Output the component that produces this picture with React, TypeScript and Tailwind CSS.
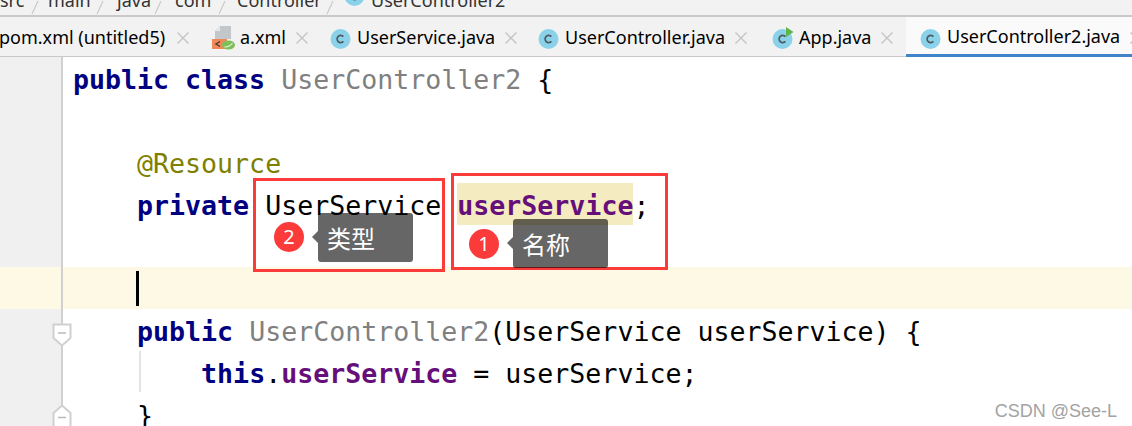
import { ReactNode } from "react";

function ClassIcon({ run }: { run?: boolean }) {
    return (
        <svg width="22" height="22" viewBox="0 0 22 22" className="shrink-0">
            <circle cx="10.5" cy="12" r="10" fill="#89d2ea" />
            <path d="M13.4 9.6a3.6 3.6 0 1 0 0 4.800" fill="none" stroke="#4d5a60" strokeWidth="1.7" />
            {run && <path d="M14 0v10l7.500-5z" fill="#5fb548" />}
        </svg>
    );
}

function XmlIcon() {
    return (
        <svg width="23" height="24" viewBox="0 0 23 24" className="shrink-0">
            <path d="M8 0h11v13H3V5z" fill="#c4c7c9" />
            <path d="M8 0v5H3z" fill="#e8e8e8" />
            <rect x="0" y="13" width="15" height="10" fill="#f0885a" />
            <path d="M8 15.500l-4 2.500 4 2.500" fill="none" stroke="#4a3a30" strokeWidth="1.400" />
            <ellipse cx="16.500" cy="19" rx="6.500" ry="4.500" fill="#7fbf5a" />
            <path d="M12.500 21c3 0 6-1 8-4" fill="none" stroke="#e9f5dd" strokeWidth="1.100" />
        </svg>
    );
}

function Slash({ className }: { className: string }) {
    return (
        <svg width="10" height="15" viewBox="0 0 10 15" className={`shrink-0 ${className}`}>
            <path d="M8 1L2 14" stroke="#c9c9c9" strokeWidth="1.200" />
        </svg>
    );
}

function Tab({ icon, label, closeGap = "ml-[10px]", className = "" }: { icon?: ReactNode; label: string; closeGap?: string; className?: string }) {
    return (
        <div className={`flex items-center shrink-0 h-full pt-[3px] ${className}`}>
            {icon}
            <span className="ml-[5px] -mt-[2px] whitespace-nowrap">{label}</span>
            <span className={closeGap}>
                <svg width="12" height="12" viewBox="0 0 12 12"><path d="M.5.500l11 11M11.500.500l-11 11" stroke="#c4c4c4" strokeWidth="1.400" /></svg>
            </span>
        </div>
    );
}

function FoldMark({ up }: { up?: boolean }) {
    return (
        <svg width="20" height="24" viewBox="0 0 20 24" className={`absolute left-[52px] ${up ? "top-[11px]" : "top-[14px]"}`}>
            <path
                d={up ? "M1.500 9L10 1.500 18.500 9v14h-17z" : "M1.500 1.500h17V15L10 22.500 1.500 15z"}
                fill="#ffffff"
                stroke="#d0d0d0"
                strokeWidth="2"
            />
            <path d={up ? "M6 13.500h8" : "M6 10h8"} stroke="#bdbdbd" strokeWidth="1.600" />
        </svg>
    );
}

function Line({ children, caret, fold }: { children?: ReactNode; caret?: boolean; fold?: ReactNode }) {
    return (
        <div className={`relative flex h-[42px] shrink-0 ${caret ? "bg-[#fef9e4]" : ""}`}>
            <div className={`relative w-[61px] shrink-0 ${caret ? "" : "bg-[#f0f0f0]"}`}>{fold}</div>
            <div className="w-[2px] shrink-0 bg-[#d0d0d0]" />
            <pre className="pl-[10px] leading-[46px] whitespace-pre font-[inherit]">{children}</pre>
        </div>
    );
}

const kw = "font-bold text-[#000080]";
const field = "font-bold text-[#660e7a]";
const dim = "text-[#808080]";

export default function App() {
    return (
        <div className="relative w-[1132px] h-[426px] overflow-hidden bg-white text-black font-['Noto_Sans','Open_Sans',sans-serif]">
            {/* breadcrumb, cut by the top of the picture */}
            <div className="h-[15px] bg-[#f2f2f2] overflow-hidden text-[18px] text-[#333]">
                <div className="flex items-start h-[15px] leading-[15px] whitespace-nowrap">
                    <span className="w-[30px] -mt-[7px]">src</span><Slash className="mr-[8px]" />
                    <span className="w-[47px] -mt-[7px]">main</span><Slash className="mr-[12px]" />
                    <span className="w-[36px] -mt-[7px]">java</span><Slash className="mr-[12px]" />
                    <span className="w-[42px] -mt-[7px]">com</span><Slash className="mr-[10px]" />
                    <span className="w-[88px] -mt-[7px]">Controller</span><Slash className="mr-[9px]" />
                    <span className="-mt-[16px] shrink-0"><ClassIcon /></span>
                    <span className="ml-[5px] -mt-[7px]">UserController2</span>
                </div>
            </div>
            <div className="h-[2px] bg-[#c9c9c9]" />

            {/* tabs */}
            <div className="flex h-[40px] bg-[#f2f2f2] border-b border-[#c9c9c9] text-[18px] text-black">
                <Tab label="pom.xml (untitled5)" className="-ml-[6px] w-[218px]" closeGap="ml-[12px]" />
                <Tab icon={<XmlIcon />} label="a.xml" className="w-[118px]" />
                <Tab icon={<ClassIcon />} label="UserService.java" className="w-[208px]" />
                <Tab icon={<ClassIcon />} label="UserController.java" className="w-[234px]" />
                <Tab icon={<ClassIcon run />} label="App.java" className="w-[134px]" />
                <div className="flex-1 h-[40px] pl-[14px] pt-[1px] bg-[#fafafa] border-b-[3px] border-[#4083c9]">
                    <Tab icon={<ClassIcon />} label="UserController2.java" />
                </div>
            </div>

            {/* editor */}
            <div className="flex flex-col font-['DejaVu_Sans_Mono',monospace] text-[26.6px]">
                <Line><span className={kw}>public class </span><span className={dim}>UserController2 </span>{"{"}</Line>
                <Line />
                <Line>{"    "}<span className="text-[#808000]">@Resource</span></Line>
                <Line>{"    "}<span className={kw}>private </span>UserService <span className={`${field} inline-block h-[42px] bg-[#f5ebc0]`}>userService</span>;</Line>
                <Line />
                <Line caret>
                    <span className="absolute left-[136px] top-[4px] w-[3px] h-[35px] bg-black" />
                </Line>
                <Line fold={<FoldMark />}>{"    "}<span className={kw}>public </span><span className={dim}>UserController2</span>(UserService userService) {"{"}</Line>
                <Line>
                    <span className="absolute left-[139px] top-0 w-[2px] h-[41px] bg-[#e3e3e3]" />
                    {"        "}<span className={kw}>this</span>.<span className={field}>userService</span> = userService;
                </Line>
                <Line fold={<FoldMark up />}>{"    }"}</Line>
            </div>

            {/* annotations on top of the code */}
            <div className="absolute left-[253px] top-[178px] w-[192px] h-[94px] border-[3px] border-[#fb3a3a]" />
            <div className="absolute left-[451px] top-[173px] w-[217px] h-[97px] border-[3px] border-[#fb3a3a]" />

            <div className="absolute left-[274px] top-[222px] flex items-center justify-center w-[30px] h-[30px] rounded-full bg-[#fb3a3a] text-white text-[20px] font-['Noto_Sans',sans-serif]">2</div>
            <div className="absolute left-[318px] top-[213px] flex items-center w-[95px] h-[49px] pl-[9px] rounded-[3px] bg-black/60 text-white text-[24px] font-['Noto_Sans_CJK_SC',sans-serif]">
                <span className="absolute -left-[6px] top-[18px] w-0 h-0 border-y-[6px] border-y-transparent border-r-[6px] border-r-black/60" />
                类型
            </div>

            <div className="absolute left-[469px] top-[229px] flex items-center justify-center w-[30px] h-[30px] rounded-full bg-[#fb3a3a] text-white text-[20px] font-['Noto_Sans',sans-serif]">1</div>
            <div className="absolute left-[513px] top-[219px] flex items-center w-[95px] h-[49px] pl-[9px] rounded-[3px] bg-black/60 text-white text-[24px] font-['Noto_Sans_CJK_SC',sans-serif]">
                <span className="absolute -left-[6px] top-[18px] w-0 h-0 border-y-[6px] border-y-transparent border-r-[6px] border-r-black/60" />
                名称
            </div>

            <div className="absolute right-[15px] bottom-[5px] text-[18px] leading-[20px] text-[#a3a3a3] font-['Liberation_Sans',sans-serif]">CSDN @See-L</div>
        </div>
    );
}
